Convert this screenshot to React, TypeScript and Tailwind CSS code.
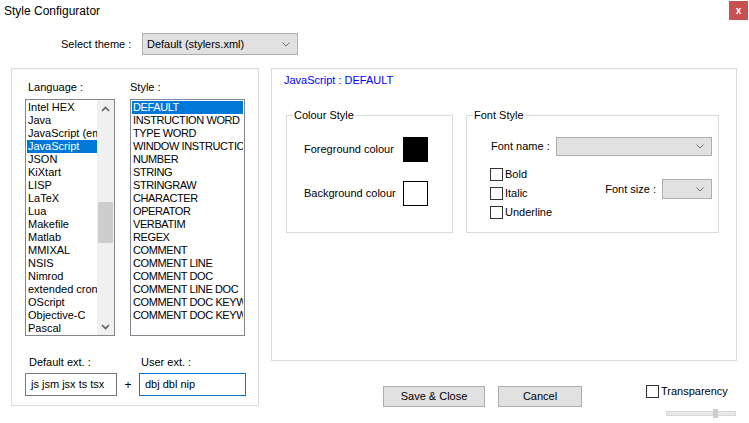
import React from "react";

const languages = [
  "Intel HEX",
  "Java",
  "JavaScript (embedded)",
  "JavaScript",
  "JSON",
  "KiXtart",
  "LISP",
  "LaTeX",
  "Lua",
  "Makefile",
  "Matlab",
  "MMIXAL",
  "NSIS",
  "Nimrod",
  "extended crontab",
  "OScript",
  "Objective-C",
  "Pascal",
];

const styles = [
  "DEFAULT",
  "INSTRUCTION WORD",
  "TYPE WORD",
  "WINDOW INSTRUCTION",
  "NUMBER",
  "STRING",
  "STRINGRAW",
  "CHARACTER",
  "OPERATOR",
  "VERBATIM",
  "REGEX",
  "COMMENT",
  "COMMENT LINE",
  "COMMENT DOC",
  "COMMENT LINE DOC",
  "COMMENT DOC KEYWORD",
  "COMMENT DOC KEYWORD ERROR",
];

function Chevron({ up = false }: { up?: boolean }) {
  return (
    <svg width="9" height="6" viewBox="0 0 9 6">
      <polyline
        points={up ? "1,5 4.5,1.5 8,5" : "1,1 4.5,4.5 8,1"}
        fill="none"
        stroke="#606060"
        strokeWidth="1.6"
      />
    </svg>
  );
}

function Combo({ w, h, value }: { w: string; h: string; value?: string }) {
  return (
    <div
      className={`${w} ${h} flex items-center justify-between border border-[#adadad] bg-[#e1e1e1] pl-[4px] pr-[7px]`}
    >
      <span className="text-[11px] leading-none">{value}</span>
      <svg width="8" height="5" viewBox="0 0 8 5">
        <polyline points="0.5,0.5 4,4 7.5,0.5" fill="none" stroke="#707070" strokeWidth="1" />
      </svg>
    </div>
  );
}

function Check({ label }: { label: string }) {
  return (
    <div className="flex h-[13px] items-center">
      <div className="h-[13px] w-[13px] border border-[#333] bg-white" />
      <span className="ml-[2px] leading-[13px]">{label}</span>
    </div>
  );
}

function Group({
  title,
  className,
  children,
}: {
  title: string;
  className: string;
  children: React.ReactNode;
}) {
  return (
    <div className={`relative border border-[#dcdcdc] ${className}`}>
      <span className="absolute left-[6px] top-[-7px] bg-white px-[1px] leading-[13px]">
        {title}
      </span>
      {children}
    </div>
  );
}

export default function App() {
  return (
    <div className="flex h-[423px] w-[749px] flex-col overflow-hidden bg-white font-['Liberation_Sans',Arial,sans-serif] text-[11px] text-black">
      {/* title bar */}
      <div className="flex h-[33px] items-start justify-between">
        <span className="pl-[4px] pt-[4px] text-[12px] leading-[14px]">Style Configurator</span>
        <div className="mr-[1px] mt-[1px] flex h-[19px] w-[19px] items-center justify-center bg-[#c75050] text-[10px] font-bold leading-none text-white">
          x
        </div>
      </div>

      {/* theme row */}
      <div className="flex h-[22px] items-center">
        <span className="ml-[61px] w-[81px]">Select theme :</span>
        <Combo w="w-[156px]" h="h-[22px]" value="Default (stylers.xml)" />
      </div>

      <div className="mt-[13px] flex items-start">
        {/* left group */}
        <div className="ml-[11px] flex h-[338px] w-[248px] flex-col border border-[#dcdcdc]">
          <div className="mt-[12px] flex">
            <div className="ml-[13px] w-[90px]">
              <div className="pl-[3px] leading-[13px]">Language :</div>
              <div className="mt-[5px] flex h-[237px] border border-[#828790] bg-white">
                <div className="min-w-0 flex-1 overflow-hidden pl-[1px] pt-[1px]">
                  {languages.map((l) => (
                    <div
                      key={l}
                      className={`h-[13px] overflow-hidden whitespace-nowrap pl-[1px] leading-[13px] ${
                        l === "JavaScript" ? "bg-[#0078d7] text-white" : ""
                      }`}
                    >
                      {l}
                    </div>
                  ))}
                </div>
                <div className="flex w-[17px] flex-col bg-[#f0f0f0]">
                  <div className="flex h-[17px] items-center justify-center">
                    <Chevron up />
                  </div>
                  <div className="flex flex-1 flex-col">
                    <div className="mx-[1px] mt-[85px] h-[41px] bg-[#cdcdcd]" />
                  </div>
                  <div className="flex h-[17px] items-center justify-center">
                    <Chevron />
                  </div>
                </div>
              </div>
            </div>
            <div className="ml-[15px] w-[115px]">
              <div className="leading-[13px]">Style :</div>
              <div className="mt-[5px] h-[237px] overflow-hidden border border-[#828790] bg-white p-[1px]">
                {styles.map((s, i) => (
                  <div
                    key={i}
                    className={`h-[13px] overflow-hidden whitespace-nowrap pl-[1px] leading-[13px] tracking-[-0.4px] ${
                      i === 0 ? "bg-[#0078d7] text-white" : ""
                    }`}
                  >
                    {s}
                  </div>
                ))}
              </div>
            </div>
          </div>

          {/* extensions */}
          <div className="mt-[20px] flex items-end">
            <div className="ml-[13px] w-[92px]">
              <div className="pl-[4px] leading-[13px]">Default ext. :</div>
              <div className="mt-[4px] flex h-[23px] items-center border border-[#7a7a7a] pl-[5px]">
                js jsm jsx ts tsx
              </div>
            </div>
            <div className="flex h-[23px] w-[22px] items-center justify-center text-[12px]">+</div>
            <div className="w-[107px]">
              <div className="pl-[2px] leading-[13px]">User ext. :</div>
              <div className="mt-[4px] flex h-[23px] items-center border border-[#0078d7] pl-[5px]">
                dbj dbl nip
              </div>
            </div>
          </div>
        </div>

        {/* right column */}
        <div className="ml-[12px] flex w-[466px] flex-col">
          <div className="flex h-[293px] flex-col border border-[#dcdcdc]">
            <div className="pl-[12px] pt-[5px] leading-[13px] text-[#0000ff]">JavaScript : DEFAULT</div>
            <div className="mt-[28px] flex items-start">
              <Group title="Colour Style" className="ml-[14px] h-[118px] w-[167px]">
                <div className="mt-[21px] flex items-center pl-[17px]">
                  <span className="w-[99px]">Foreground colour</span>
                  <div className="h-[25px] w-[25px] border border-black bg-black" />
                </div>
                <div className="mt-[19px] flex items-center pl-[17px]">
                  <span className="w-[99px]">Background colour</span>
                  <div className="h-[25px] w-[25px] border border-black bg-white" />
                </div>
              </Group>
              <Group title="Font Style" className="ml-[13px] h-[118px] w-[253px]">
                <div className="mt-[21px] flex items-center pl-[24px]">
                  <span className="w-[65px]">Font name :</span>
                  <Combo w="w-[156px]" h="h-[19px]" />
                </div>
                <div className="mt-[12px] flex items-start">
                  <div className="ml-[23px] flex flex-col gap-[6px]">
                    <Check label="Bold" />
                    <Check label="Italic" />
                    <Check label="Underline" />
                  </div>
                  <div className="ml-auto mr-[6px] mt-[11px] flex items-center">
                    <span className="mr-[6px]">Font size :</span>
                    <Combo w="w-[50px]" h="h-[20px]" />
                  </div>
                </div>
              </Group>
            </div>
          </div>

          {/* bottom row */}
          <div className="mt-[24px] flex items-start">
            <div className="ml-[112px] mt-[1px] flex h-[21px] w-[102px] items-center justify-center border border-[#adadad] bg-[#e1e1e1]">
              Save &amp; Close
            </div>
            <div className="ml-[13px] mt-[1px] flex h-[21px] w-[84px] items-center justify-center border border-[#adadad] bg-[#e1e1e1]">
              Cancel
            </div>
            <div className="ml-auto flex w-[91px] flex-col">
              <Check label="Transparency" />
              <div className="ml-[20px] mt-[11px] flex h-[9px] w-[70px] items-center">
                <div className="flex h-[5px] flex-1 items-center border border-[#d6d6d6] bg-[#e7eaea]">
                  <div className="ml-[46px] h-[9px] w-[5px] bg-[#cdcdcd]" />
                </div>
              </div>
            </div>
          </div>
        </div>
      </div>
    </div>
  );
}
